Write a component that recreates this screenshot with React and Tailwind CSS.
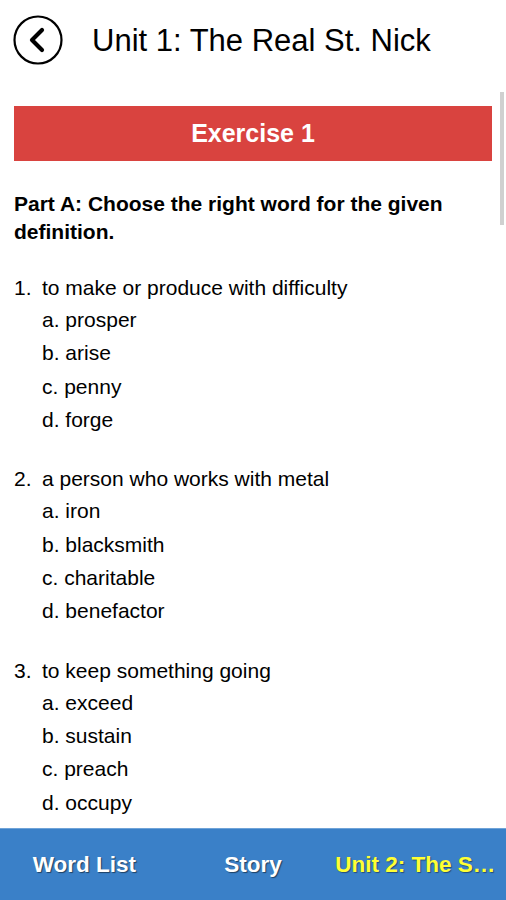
import React from 'react';

const questions = [
  {
    n: '1.',
    text: 'to make or produce with difficulty',
    options: ['a. prosper', 'b. arise', 'c. penny', 'd. forge'],
  },
  {
    n: '2.',
    text: 'a person who works with metal',
    options: ['a. iron', 'b. blacksmith', 'c. charitable', 'd. benefactor'],
  },
  {
    n: '3.',
    text: 'to keep something going',
    options: ['a. exceed', 'b. sustain', 'c. preach', 'd. occupy'],
  },
];

const BackIcon = () => (
  <svg width="50" height="50" viewBox="0 0 50 50" fill="none">
    <circle cx="25" cy="25" r="23.5" stroke="#000" strokeWidth="2.2" />
    <path d="M29 15 L19 25 L29 35" stroke="#000" strokeWidth="4.2" strokeLinecap="round" strokeLinejoin="round" />
  </svg>
);

const Question = ({ q }) => (
  <div className="mb-[27px]">
    <div className="flex text-[21px] leading-[31px]">
      <span className="w-[28px]">{q.n}</span>
      <span>{q.text}</span>
    </div>
    {q.options.map((o) => (
      <div key={o} className="pl-[28px] text-[21px] leading-[33.33px]">
        {o}
      </div>
    ))}
  </div>
);

export default function App() {
  return (
    <div
      className="relative flex h-[900px] w-[506px] flex-col overflow-hidden bg-white text-black"
      style={{ fontFamily: '"Liberation Sans", Arial, sans-serif' }}
    >
      {/* header */}
      <div className="flex h-[80px] shrink-0 items-center pl-[13px]">
        <BackIcon />
        <h1 className="ml-[29px] text-[31px] leading-none">Unit 1: The Real St. Nick</h1>
      </div>

      {/* content */}
      <div className="relative flex-1 overflow-hidden px-[14px] pt-[26px]">
        <div className="flex h-[55px] items-center justify-center bg-[#d9433f]">
          <span className="text-[25px] font-bold text-white">Exercise 1</span>
        </div>
        <p className="mt-[29px] text-[21px] font-bold leading-[28px]">
          Part A: Choose the right word for the given definition.
        </p>
        <div className="mt-[26px]">
          {questions.map((q) => (
            <Question key={q.n} q={q} />
          ))}
        </div>
        <div className="absolute right-[2px] top-[12px] h-[133px] w-[4px] bg-[#d0d0d0]" />
      </div>

      {/* bottom bar */}
      <div className="grid h-[72px] shrink-0 grid-cols-3 items-center border-t border-[#6fa3d8] bg-[#3a80c8] text-[22.5px] font-bold">
        <div className="text-center text-white [text-shadow:1px_1px_1px_rgba(0,0,0,0.5)]">Word List</div>
        <div className="text-center text-white [text-shadow:1px_1px_1px_rgba(0,0,0,0.5)]">Story</div>
        <div className="-ml-[2px] truncate pr-[10px] text-[#ffff33] [text-shadow:1px_1px_1px_rgba(0,0,0,0.4)]">
          Unit 2: The Story of the Santa
        </div>
      </div>
    </div>
  );
}
